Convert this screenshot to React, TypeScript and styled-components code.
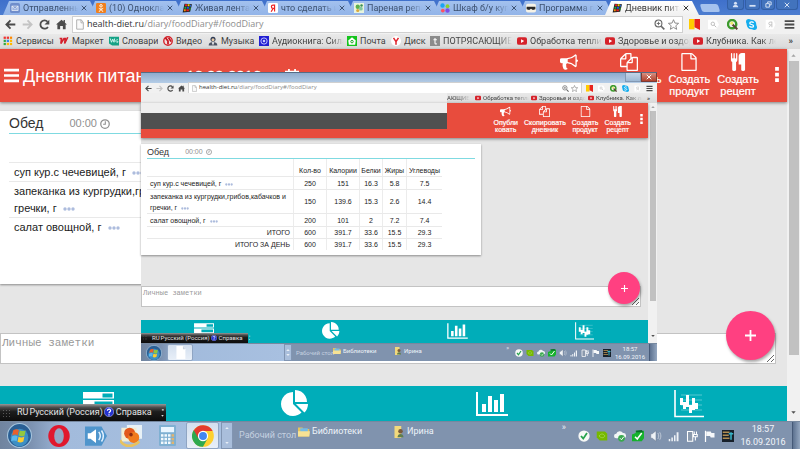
import React from 'react';
import styled, { createGlobalStyle, css, ThemeProvider } from 'styled-components';

const large = {
  toolbarH: 19, toolIcon: 11, toolGap: 6, toolPad: 5, urlH: 15, urlFont: 9, urlPad: 3, urlGap: 3, extGap: 8, extPad: 5,
  bookmarkH: 15, bookmarkFont: 9, bookmarkIcon: 10, bookmarkGap: 3,
  headerH: 53, headerPad: 4, actionIcon: 18, actionFont: 11, actionLine: 12, actionGap: 7, actionEnd: 8, dots: 15, dotsGap: 9,
  cardTop: 9, cardPad: 9, cardW: 527, cardTitle: 14, cardTitleH: 23, cardTime: 11, cardTimeGap: 23, tableFont: 11, tableHead: 28,
  rowLine: 17, cellPad: 5, nameCol: 228, cardBottom: 48,
  notesTop: 49, notesH: 31, notesFont: 11, notesEnd: 11, fab: 49, fabIcon: 11, fabBottom: 4,
  notesBottom: 22, footerH: 35, footerIcon: 28, footerPad: 4, scrollW: 13, thumbTop: 12, thumbH: 294,
  langH: 17, langFont: 9, langW: 166, langIcon: 10,
  taskH: 28, taskFont: 9, trayIcon: 12, trayGap: 6, clockFont: 9, clockLine: 13, clockW: 58, scrollerW: 12, placePad: 6,
};

const small: typeof large = {
  toolbarH: 10, toolIcon: 7, toolGap: 4, toolPad: 4, urlH: 10, urlFont: 6, urlPad: 3, urlGap: 2, extGap: 5, extPad: 4,
  bookmarkH: 10, bookmarkFont: 6, bookmarkIcon: 6, bookmarkGap: 2,
  headerH: 35, headerPad: 3, actionIcon: 11, actionFont: 7, actionLine: 7, actionGap: 6, actionEnd: 5, dots: 10, dotsGap: 3,
  cardTop: 6, cardPad: 6, cardW: 340, cardTitle: 9, cardTitleH: 15, cardTime: 7, cardTimeGap: 13, tableFont: 7, tableHead: 17,
  rowLine: 11, cellPad: 3, nameCol: 147, cardBottom: 5,
  notesTop: 31, notesH: 21, notesFont: 7, notesEnd: 7, fab: 32, fabIcon: 7, fabBottom: 3,
  notesBottom: 13, footerH: 23, footerIcon: 18, footerPad: 2, scrollW: 9, thumbTop: 8, thumbH: 190,
  langH: 10, langFont: 6, langW: 107, langIcon: 6,
  taskH: 18, taskFont: 6, trayIcon: 8, trayGap: 3, clockFont: 6, clockLine: 8, clockW: 38, scrollerW: 8, placePad: 4,
};

type Key = keyof typeof large;
const d = (key: Key) => (p: any) => `${p.theme[key]}px`;

const UI = 'Roboto, "Open Sans", sans-serif';
const URL_FONT = '"Open Sans", Roboto, sans-serif';
const PAGE = '"Liberation Sans", Arial, sans-serif';

const Global = createGlobalStyle`
  * { box-sizing: border-box; }
  body { margin: 0; overflow: hidden; }
  button, input, textarea { font: inherit; color: inherit; border: 0; padding: 0; margin: 0; background: none; }
  a { color: inherit; text-decoration: none; }
  svg { display: block; flex: none; }
`;

const Desktop = styled.div`
  position: relative;
  display: flex;
  flex-direction: column;
  min-height: 100vh;
  overflow: hidden;
  font-family: ${PAGE};
  background: #e6e6e6;
`;

const fade = css`
  -webkit-mask-image: linear-gradient(90deg, #000 calc(100% - 14px), transparent);
  mask-image: linear-gradient(90deg, #000 calc(100% - 14px), transparent);
`;

/* ---------- Tab strip ---------- */
const TabStrip = styled.div`
  display: flex;
  height: 15px;
  padding-left: 3px;
  background: linear-gradient(#3f70cb, #4c7dd0);
  font-family: ${UI};
`;
const Tab = styled.div<{ $active?: boolean }>`
  position: relative;
  z-index: ${(p) => (p.$active ? 2 : 1)};
  display: flex;
  align-items: center;
  width: 94px;
  height: 14px;
  margin: 1px -8px 0 0;
  padding: 0 10px 0 7px;
  gap: 3px;
  clip-path: polygon(6px 0, calc(100% - 7px) 0, 100% 100%, 0 100%);
  background: ${(p) => (p.$active ? 'linear-gradient(#fff, #f1f1f1)' : 'linear-gradient(#a3c1ee, #92b4e8)')};
  color: ${(p) => (p.$active ? '#333' : '#3c5170')};
`;
const TabLabel = styled.span`
  flex: 1;
  min-width: 0;
  overflow: hidden;
  white-space: nowrap;
  font-size: 9px;
  line-height: 12px;
  ${fade}
`;
const NewTab = styled.button`
  width: 18px;
  height: 8px;
  margin: 4px 0 0 10px;
  && { background: #a5c2ee; }
  border-radius: 2px;
  transform: skewX(18deg);
`;
const WindowButtons = styled.div`
  display: flex;
  margin: 0 2px 0 auto;
  gap: 1px;
  height: 10px;
`;
const WindowButton = styled.button<{ $w: number }>`
  display: grid;
  place-items: center;
  width: ${(p) => p.$w}px;
  background: #4273bd;
  border: 1px solid #335fa5;
  border-top: 0;
  border-radius: 0 0 3px 3px;
  color: #d5e2f5;
`;

/* ---------- Toolbar ---------- */
const Toolbar = styled.div`
  display: flex;
  align-items: center;
  height: ${d('toolbarH')};
  padding: 0 ${d('toolPad')};
  gap: ${d('toolGap')};
  background: #f1f1f1;
  color: #4b4b4b;
  font-family: ${UI};
`;
const IconButton = styled.button<{ $dim?: boolean }>`
  display: grid;
  place-items: center;
  color: ${(p) => (p.$dim ? '#c4c4c4' : '#4b4b4b')};
`;
const UrlBox = styled.div`
  flex: 1;
  display: flex;
  align-items: center;
  height: ${d('urlH')};
  padding: 0 ${d('urlPad')};
  gap: ${d('urlGap')};
  background: #fff;
  box-shadow: 0 0 0 1px #d0d0d0;
`;
const UrlText = styled.a`
  flex: 1;
  white-space: nowrap;
  font-family: ${URL_FONT};
  font-size: ${d('urlFont')};
  line-height: 1.2;
  color: #8e8e8e;
  b { font-weight: 400; color: #333; }
`;
const Extensions = styled.div`
  display: flex;
  align-items: center;
  gap: ${d('extGap')};
  padding-left: 1px;
`;

/* ---------- Bookmarks ---------- */
const Bookmarks = styled.nav`
  flex: 1;
  display: flex;
  align-items: center;
  height: ${d('bookmarkH')};
  background: linear-gradient(#e9e9e9, #d9d9d9);
  font-family: ${UI};
  font-size: ${d('bookmarkFont')};
  line-height: 1.2;
  color: #424242;
`;
const Bookmark = styled.a<{ $w: number; $fade?: boolean }>`
  display: flex;
  align-items: center;
  gap: ${d('bookmarkGap')};
  width: ${(p) => p.$w}px;
  padding-right: ${(p: any) => (p.$fade ? p.theme.bookmarkGap : 0)}px;
  white-space: nowrap;
  span { overflow: hidden; ${(p) => p.$fade && fade} }
`;
const BookmarkRow = styled.div`display: flex;`;
const MainBookmarks = styled(Bookmarks)`padding-left: 3px;`;
const BlankBookmarks = styled.div`width: 306px; background: #efefef;`;
const More = styled.button`
  && { margin: 0 7px 0 auto; font-weight: 700; line-height: 1; }
`;

/* ---------- Page ---------- */
const Body = styled.div`
  flex: 1;
  display: flex;
`;
const Page = styled.main`
  position: relative;
  flex: 1;
  min-width: 0;
  display: flex;
  flex-direction: column;
  background: #e6e6e6;
`;
const Scrollbar = styled.div`
  display: flex;
  flex-direction: column;
  align-items: center;
  width: ${d('scrollW')};
  padding-bottom: 3px;
  background: #f1f1f1;
`;
const Arrow = styled.span<{ $down?: boolean }>`
  display: grid;
  place-items: center;
  height: ${d('thumbTop')};
  color: ${(p) => (p.$down ? '#505050' : '#a3a3a3')};
  margin-top: ${(p) => (p.$down ? 'auto' : '0')};
`;
const Thumb = styled.span`
  width: calc(100% - 3px);
  height: ${d('thumbH')};
  background: #c1c1c1;
`;
const Header = styled.header`
  position: relative;
  display: flex;
  height: ${d('headerH')};
  background: #e84c3d;
  color: #fff;
  box-shadow: 0 1px 3px rgba(0, 0, 0, 0.45);
`;
const HeaderTitle = styled.div`
  display: flex;
  align-items: center;
  gap: 4px;
  padding-left: 4px;
  height: 100%;
  white-space: nowrap;
  h1 { margin: 0; font-size: 18px; line-height: 22px; font-weight: 400; }
`;
const DateNav = styled.div`
  display: flex;
  align-items: center;
  gap: 7px;
  font-size: 15px;
  line-height: 16px;
  -webkit-text-stroke: 0.3px #fff;
`;
const Mask = styled.div`
  width: 306px;
  height: 26px;
  padding-top: 10px;
  background: #505050;
  box-shadow: inset 0 10px #efefef;
`;
const Actions = styled.div`
  display: flex;
  align-items: flex-start;
  gap: ${d('actionGap')};
  margin-left: auto;
  padding: ${d('headerPad')} ${d('actionEnd')} 0 0;
`;
const Action = styled.button`
  display: flex;
  flex-direction: column;
  align-items: center;
  gap: 2px;
  font-size: ${d('actionFont')};
  line-height: ${d('actionLine')};
  white-space: pre-line;
  -webkit-text-stroke: 0.2px #fff;
`;
const Dots = styled.button`
  && { margin: ${(p: any) => p.theme.actionIcon - p.theme.headerPad}px 0 0 ${d('dotsGap')}; }
`;

const Card = styled.section`
  width: ${d('cardW')};
  max-width: 100%;
  margin-top: ${d('cardTop')};
  padding: 0 ${d('cardPad')} ${d('cardBottom')};
  background: #fff;
  box-shadow: 0 1px 2px rgba(0, 0, 0, 0.4);
`;
const CardHead = styled.div`
  display: flex;
  align-items: center;
  height: ${d('cardTitleH')};
  padding-top: ${d('bookmarkGap')};
  border-bottom: 1px solid #7fdae1;
  h2 { margin: 0 ${d('cardTimeGap')} 0 0; font-weight: 400; font-size: ${d('cardTitle')}; line-height: 1.2; color: #333; }
`;
const Time = styled.button`
  display: flex;
  align-items: center;
  gap: 3px;
  && { padding-left: ${d('urlPad')}; }
  font-size: ${d('cardTime')};
  line-height: 1.2;
  && { color: #8f8f8f; }
`;
const Table = styled.table`
  border-collapse: separate;
  border-spacing: 0;
  table-layout: fixed;
  font-size: ${d('tableFont')};
  line-height: ${d('rowLine')};
  color: #1c1c1c;
  th, td { padding: 0; font-weight: 400; text-align: center; border-right: 1px solid #ececec; border-top: 1px solid #e9e9e9; }
  th:last-child, td:last-child { border-right: 0; }
  thead th { height: ${d('tableHead')}; border-top: 0; vertical-align: bottom; }
`;
const Col = styled.col<{ $w?: number }>`width: ${(p: any) => p.$w ?? p.theme.nameCol}px;`;
const NameCell = styled.td`
  && { text-align: left; padding: 1px 0 0 ${d('cellPad')}; }
`;
const TotalCell = styled.th`
  && { text-align: right; padding-right: ${d('cellPad')}; }
`;
const DotsButton = styled.button`
  && { display: inline-block; margin-left: ${d('bookmarkGap')}; vertical-align: middle; }
`;

const Notes = styled.div`
  position: relative;
  display: flex;
  margin: ${d('notesTop')} ${d('notesEnd')} ${d('notesBottom')} 0;
`;
const NotesBox = styled.textarea`
  && {
    flex: 1;
    height: ${d('notesH')};
    padding: 2px 1px;
    border: 1px solid #c3c3c3;
    background: #fff;
    font-family: "Liberation Mono", monospace;
    font-size: ${d('notesFont')};
    line-height: 1.3;
    outline: 0;
    overflow: hidden;
  }
  &::placeholder { color: #999; opacity: 1; }
`;
const Fab = styled.button`
  && {
    position: absolute;
    right: 1px;
    bottom: ${d('fabBottom')};
    display: grid;
    place-items: center;
    width: ${d('fab')};
    height: ${d('fab')};
    border-radius: 50%;
    background: #ff4081;
    color: #fff;
    box-shadow: 1px 2px 3px rgba(0, 0, 0, 0.35);
  }
`;
const Footer = styled.footer`
  display: grid;
  grid-template-columns: repeat(4, 1fr);
  height: ${d('footerH')};
  margin-top: auto;
  padding-top: ${d('footerPad')};
  background: #00adb9;
  color: #fff;
  button { display: grid; justify-items: center; align-content: start; }
`;
const LanguageBar = styled.div`
  position: absolute;
  left: 0;
  bottom: 0;
  display: flex;
  align-items: center;
  gap: 1px;
  width: ${d('langW')};
  height: ${d('langH')};
  padding: 0 ${d('urlPad')} 0 2px;
  background: linear-gradient(#999 0, #4d4d4d 20%, #1d1d1d 45%, #0c0c0c);
  color: #e3e3e3;
  font: ${d('langFont')}/1.2 ${UI};
  white-space: nowrap;
`;
const Help = styled.button`
  && { display: flex; align-items: center; gap: 2px; margin: 0 ${d('extGap')} 0 auto; }
`;
const LangCode = styled.span`margin-left: ${d('placePad')};`;

/* ---------- Taskbar ---------- */
const Taskbar = styled.div`
  display: flex;
  height: ${d('taskH')};
  border-top: 1px solid #76889f;
  background: #8093ae;
  color: #e8eef6;
  font: ${d('taskFont')}/1.3 ${UI};
`;
const Apps = styled.div<{ $w: number }>`
  display: flex;
  align-items: center;
  width: ${(p) => p.$w}px;
  background: linear-gradient(90deg, #70849f 0, #7c92b1 14%, #a2bbdc 30%, #a8c0e0);
`;
const TaskButton = styled.button<{ $w: number; $open?: boolean }>`
  display: grid;
  place-items: center;
  width: ${(p) => p.$w}px;
  height: 100%;
  ${(p) => p.$open && css`&& { background: linear-gradient(#d3dfee, #e8eff8); border: 1px solid #8fa5c3; border-radius: 2px; }`}
`;
const Scroller = styled.div`
  display: flex;
  flex-direction: column;
  justify-content: space-between;
  align-items: center;
  width: ${d('scrollerW')};
  padding: 3px 0;
  background: #a9bedb;
  border: 1px solid #8195b2;
`;
const Places = styled.div`
  flex: 1;
  display: flex;
  align-items: flex-start;
  white-space: nowrap;
`;
const Place = styled.button<{ $w: number; $dim?: boolean }>`
  && {
    display: flex;
    align-items: center;
    gap: 2px;
    width: ${(p) => p.$w}px;
    height: ${(p: any) => (p.$dim ? '100%' : `${p.theme.taskH - p.theme.extGap}px`)};
    padding-left: ${(p: any) => (p.$dim ? p.theme.placePad : 0)}px;
    color: ${(p) => (p.$dim ? '#c5d1e0' : '#eef3f9')};
  }
`;
const Tray = styled.div`
  display: flex;
  align-items: center;
  gap: ${d('trayGap')};
`;
const Chevron = styled.button`
  align-self: flex-start;
  && { margin-right: ${d('trayGap')}; line-height: 1.2; }
`;
const Clock = styled.time`
  width: ${d('clockW')};
  align-self: center;
  text-align: center;
  font-size: ${d('clockFont')};
  line-height: ${d('clockLine')};
  color: #f1f5fa;
`;
const ShowDesktop = styled.button`
  && { width: ${d('scrollerW')}; max-width: 8px; background: linear-gradient(90deg, #5d7290, #94a7c0); border-left: 1px solid #465a78; }
`;

/* ---------- Floating window ---------- */
const FloatingWindow = styled.section`
  position: absolute;
  left: 141px;
  top: 72px;
  z-index: 5;
  width: 516px;
  background: #fff;
  padding-bottom: 2px;
`;
const TitleBar = styled.div`
  display: flex;
  justify-content: flex-end;
  height: 11px;
  border-top: 1px solid #566b84;
  background: linear-gradient(#8eabce, #b5cde7);
`;
const TitleButton = styled.button<{ $close?: boolean }>`
  && {
    display: grid;
    place-items: center;
    width: 16px;
    height: 9px;
    color: #fff;
    background: ${(p) => (p.$close ? 'linear-gradient(#d78e80, #b0402c)' : 'linear-gradient(#c4d5e8, #9db8d4)')};
    border: 1px solid ${(p) => (p.$close ? '#7a3a35' : '#8298b3')};
    border-top: 0;
  }
`;

/* ---------- Icons ---------- */
const FA = ({ h, box = 1792, path }: { h: number; box?: number; path: string }) => (
  <svg width={Math.round((h * box) / 1792)} height={h} viewBox={`0 0 ${box} 1792`} fill="currentColor"><path d={path} /></svg>
);
const P = {
  file: 'M1596 380q28 28 48 76t20 88v1152q0 40-28 68t-68 28h-1344q-40 0-68-28t-28-68v-1600q0-40 28-68t68-28h896q40 0 88 20t76 48zm-444-244v376h376q-10-29-22-41l-313-313q-12-12-41-22zm384 1528v-1024h-416q-40 0-68-28t-28-68v-416h-768v1536h1280z',
  fork: 'M832 64v640q0 61-35.5 111t-92.5 70v779q0 52-38 90t-90 38h-128q-52 0-90-38t-38-90v-779q-57-20-92.5-70t-35.5-111v-640q0-26 19-45t45-19 45 19 19 45v416q0 26 19 45t45 19 45-19 19-45v-416q0-26 19-45t45-19 45 19 19 45v416q0 26 19 45t45 19 45-19 19-45v-416q0-26 19-45t45-19 45 19 19 45zm768 0v1600q0 52-38 90t-90 38h-128q-52 0-90-38t-38-90v-512h-224q-13 0-22.5-9.5t-9.5-22.5v-800q0-132 94-226t226-94h256q26 0 45 19t19 45z',
  files: 'M1696 384q40 0 68 28t28 68v1216q0 40-28 68t-68 28h-960q-40 0-68-28t-28-68v-288h-544q-40 0-68-28t-28-68v-672q0-40 20-88t48-76l408-408q28-28 76-48t88-20h416q40 0 68 28t28 68v328q68-40 128-40h416zm-544 213l-299 299h299v-299zm-640-384l-299 299h299v-299zm196 647l316-316v-416h-384v416q0 40-28 68t-68 28h-416v640h512v-256q0-40 20-88t48-76zm956 804v-1152h-384v416q0 40-28 68t-68 28h-416v640h896z',
  horn: 'M1664 640q53 0 90.5 37.5t37.5 90.5-37.5 90.5-90.5 37.5v384q0 52-38 90t-90 38q-417-347-812-380-58 19-91 66t-31 100.5 40 92.5q-20 33-23 65.5t6 58 33.5 55 48 50 61.5 50.5q-29 58-111.5 83t-168.5 11.5-132-55.5q-7-23-29.5-87.5t-32-94.5-23-89-15-101 3.5-98.5 22-110.5h-122q-66 0-113-47t-47-113v-192q0-66 47-113t113-47h480q435 0 896-384 52 0 90 38t38 90v384zm-128 604v-954q-394 302-768 343v270q377 42 768 341z',
  bars: 'M640 896v512h-256v-512h256zm384-512v1024h-256v-1024h256zm1024 1152v128h-2048v-1536h128v1408h1920zm-640-896v768h-256v-768h256zm384-384v1152h-256v-1152h256z',
  pie: 'M768 890l546 546q-106 108-247.5 168t-298.5 60q-209 0-385.5-103t-279.5-279.5-103-385.5 103-385.5 279.5-279.5 385.5-103v762zm187 6h773q0 157-60 298.5t-168 247.5zm709-128h-768v-768q209 0 385.5 103t279.5 279.5 103 385.5z',
};

const Svg = ({ s, w, children, box = '0 0 16 16' }: { s: number; w?: number; box?: string; children: React.ReactNode }) => (
  <svg width={w ?? s} height={s} viewBox={box} fill="none">{children}</svg>
);

const icons: Record<string, (s: number) => React.ReactElement> = {
  back: (s) => <Svg s={s}><path d="M15 8H3M8 2L2 8l6 6" stroke="currentColor" strokeWidth="2.6" /></Svg>,
  forward: (s) => <Svg s={s}><path d="M1 8h12M8 2l6 6-6 6" stroke="currentColor" strokeWidth="2.6" /></Svg>,
  reload: (s) => <Svg s={s}><path d="M13 11.5A6 6 0 1 1 12.5 4" stroke="currentColor" strokeWidth="2.6" /><path d="M15 1v7H8z" fill="currentColor" /></Svg>,
  home: (s) => <Svg s={s}><path d="M8 1L0 8h2v7h4v-5h4v5h4V8h2l-3-2.6V1.5h-2v2z" fill="currentColor" /></Svg>,
  page: (s) => <Svg s={s} w={Math.round(s * 0.75)} box="2 0 12 16"><path d="M3 1h7l3 4v10H3zM9.5 1v4.500H13" fill="#fafafa" stroke="#a8a8a8" strokeWidth="1.3" /></Svg>,
  zoom: (s) => <Svg s={s}><circle cx="6.500" cy="6.500" r="5" stroke="#666" strokeWidth="1.6" /><path d="M10.500 10.500L15 15" stroke="#666" strokeWidth="2.4" /><path d="M4 6.500h5M6.500 4v5" stroke="#666" strokeWidth="1.3" /></Svg>,
  star: (s) => <Svg s={s}><path d="M8 1l2.100 4.900 5.300.4-4 3.500 1.200 5.200L8 12.200 3.400 15l1.200-5.200-4-3.500 5.300-.4z" stroke="#777" strokeWidth="1.2" /></Svg>,
  yandexMark: (s) => <Svg s={s}><path d="M0 0h8v15H0z" fill="#fc0" /><path d="M8 0h8v16l-8-4z" fill="#e8231c" /></Svg>,
  lens: (s) => <Svg s={s}><path d="M0 1h12l4 7-4 7H0z" fill="#fff" /><circle cx="7" cy="7" r="2.500" stroke="#bbb" strokeWidth="1.400" /><path d="M9 9l3 3" stroke="#bbb" strokeWidth="1.400" /></Svg>,
  qGreen: (s) => <Svg s={s}><circle cx="7.500" cy="7.500" r="6" stroke="#3c9a2c" strokeWidth="3.500" /><path d="M8 8l7 7" stroke="#5b4636" strokeWidth="3" /><circle cx="7" cy="6" r="2.200" fill="#eceb6b" /></Svg>,
  skype: (s) => <Svg s={s}><circle cx="8" cy="8" r="7" fill="#14adee" /><circle cx="4" cy="4" r="4" fill="#14adee" /><circle cx="12" cy="12" r="4" fill="#14adee" /><path d="M11 5.500C10 3.500 5.500 3.500 5.500 6s5.500 1.500 5.500 4-4.500 2.500-6 .5" stroke="#fff" strokeWidth="1.8" /></Svg>,
  yaGray: (s) => <Svg s={s}><path d="M1 1h11l3 7-3 7H1z" fill="#fff" /><path d="M10 4v8M10 4.500H7.500a2 2 0 0 0 0 4H10M8 9l-2 3" stroke="#bbb" strokeWidth="1.2" /></Svg>,
  menu: (s) => <Svg s={s}><path d="M1 3h14M1 8h14M1 13h14" stroke="#4b4b4b" strokeWidth="2.700" /></Svg>,
  mail: (s) => <Svg s={s}><rect width="16" height="16" rx="3" fill="#6f8dcb" /><path d="M3 5h10v7H3zM3 5l5 4 5-4" stroke="#fff" fill="#9fb5e0" /></Svg>,
  ok: (s) => <Svg s={s}><rect width="16" height="16" rx="2" fill="#f0801e" /><circle cx="8" cy="4.500" r="2" stroke="#fff" strokeWidth="1.500" /><path d="M4.500 8.500c2 1.700 5 1.700 7 0M8 10l-3 4M8 10l3 4" stroke="#fff" strokeWidth="1.600" /></Svg>,
  cube: (s) => <Svg s={s}><path d="M4 1l12 1-3 12-12 1z" fill="#222" /><path d="M5 2h3v3H5z" fill="#e22" /><path d="M9 2h3v3H9z" fill="#fc0" /><path d="M13 3h2l-1 3h-2z" fill="#26c" /><path d="M4 6h3v3H4z" fill="#2a4" /><path d="M8 6h3v3H8z" fill="#25d" /><path d="M3 10h3v3H3z" fill="#f80" /><path d="M7 10h4v3H7z" fill="#d22" /><path d="M12 7h2l-1 5h-1z" fill="#3b3" /></Svg>,
  ya: (s) => <Svg s={s}><rect width="16" height="16" rx="2" fill="#fff" /><path d="M10.500 2.500v11M10.500 3.300H8a2.500 2.500 0 0 0 0 5.200h2.500M8 9l-3 5" stroke="#e22" strokeWidth="1.900" /></Svg>,
  plant: (s) => <Svg s={s}><rect width="16" height="16" fill="#e9f4dc" /><circle cx="6" cy="6" r="3.500" fill="#5cb04b" /><circle cx="11" cy="9" r="3" fill="#80c7a0" /><circle cx="6" cy="12" r="2.500" fill="#dba83c" /><circle cx="12" cy="4" r="2" fill="#3b8f55" /></Svg>,
  four: (s) => <Svg s={s}><circle cx="4" cy="4" r="3.500" fill="#1aa4f2" /><circle cx="12" cy="5" r="3" fill="#8bd12a" /><circle cx="4.500" cy="12" r="3" fill="#ff5163" /><circle cx="12" cy="12" r="3.500" fill="#7d4ee8" /></Svg>,
  panda: (s) => <Svg s={s}><rect y="1" width="16" height="14" rx="3" fill="#f6f2e6" /><path d="M1 6h14v4l-4 1-3-2-3 2-4-1z" fill="#292929" /></Svg>,
  apps: (s) => <Svg s={s}>{['#e33', '#e33', '#f80', '#3a4', '#38e', '#fb0', '#3a4', '#fb0', '#fb0'].map((c, i) => <rect key={i} x={1 + (i % 3) * 5} y={1 + Math.floor(i / 3) * 5} width="3.600" height="3.600" fill={c} />)}</Svg>,
  market: (s) => <Svg s={s}><path d="M1 4h3L3 12l5-8h2l-1 8 5-10" stroke="#d3202c" strokeWidth="2.600" /></Svg>,
  words: (s) => <Svg s={s}><path d="M0 1h16v14H5l-5-3z" fill="#16a286" /><path d="M2 4l2 6 2-5 2 5 1-6M14 6c-4-1-4 5 0 4v-2" stroke="#e5fff8" strokeWidth="1.400" /></Svg>,
  video: (s) => <Svg s={s}><circle cx="8" cy="8" r="6.800" stroke="#d4242b" strokeWidth="2.200" fill="#f4dede" /><path d="M4 3l4 5v5M9 3l4 6" stroke="#c3151e" strokeWidth="2.800" /></Svg>,
  music: (s) => <Svg s={s}><circle cx="8" cy="5" r="4" fill="#2e3a53" /><circle cx="8" cy="6" r="2.400" fill="#e7c9a6" /><path d="M1 15c0-7 14-7 14 0z" fill="#4b5364" /><path d="M6 10h4l-2 5z" fill="#fff" /></Svg>,
  audio: (s) => <Svg s={s}><rect width="16" height="16" fill="#2220d2" /><circle cx="8" cy="8" r="5" stroke="#c8c8ff" strokeWidth="1.500" /><circle cx="8" cy="8" r="2" fill="#c8c8ff" /></Svg>,
  post: (s) => <Svg s={s}><rect width="16" height="16" fill="#14c41c" /><path d="M8 2l6 5-1 7H3L2 7z" fill="#fff" /><circle cx="8" cy="9" r="2" stroke="#14a41c" strokeWidth="1.500" /></Svg>,
  disk: (s) => <Svg s={s}><circle cx="8" cy="8" r="8" fill="#fff" /><path d="M4 3l4 6 4-6M8 8v6" stroke="#e0242c" strokeWidth="2.400" /></Svg>,
  tGray: (s) => <Svg s={s}><rect width="16" height="16" fill="#8b8b8b" /><path d="M8 3v8c0 2 1 2 3 1.500M5.500 6H11" stroke="#fff" strokeWidth="1.700" /></Svg>,
  tube: (s) => <Svg s={s}><rect y="2" width="16" height="12" rx="3" fill="#d5222a" /><path d="M6.500 5v6l5-3z" fill="#fff" /></Svg>,
  clock: (s) => <Svg s={s}><circle cx="8" cy="8" r="6.800" stroke="currentColor" strokeWidth="2" /><path d="M8.500 3.500v5H5" stroke="currentColor" strokeWidth="1.700" /></Svg>,
  plus: (s) => <Svg s={s}><path d="M8 0v16M0 8h16" stroke="currentColor" strokeWidth="2.600" /></Svg>,
  burger: (s) => <Svg s={s}><path d="M0 2.300h16M0 8h16M0 13.700h16" stroke="currentColor" strokeWidth="2.800" /></Svg>,
  kebab: (s) => <Svg s={s} w={Math.round(s / 4)} box="0 0 4 16"><path d="M0 0h4v4H0zM0 6h4v4H0zM0 12h4v4H0z" fill="currentColor" /></Svg>,
  close: (s) => <Svg s={s}><path d="M2 2l12 12M14 2L2 14" stroke="currentColor" strokeWidth="2.600" /></Svg>,
  minimize: (s) => <Svg s={s}><path d="M1 9h14v4H1z" fill="currentColor" /></Svg>,
  restore: (s) => <Svg s={s}><path d="M6 5V2h8v7h-3M2 6h8v8H2z" stroke="currentColor" strokeWidth="2.200" /></Svg>,
  user: (s) => <Svg s={s}><circle cx="8" cy="5" r="3.500" fill="currentColor" /><path d="M2 13c0-5 12-5 12 0v1H2z" fill="currentColor" /></Svg>,
  up: (s) => <Svg s={s}><path d="M1 12l7-8 7 8z" fill="currentColor" /></Svg>,
  down: (s) => <Svg s={s}><path d="M1 4l7 8 7-8z" fill="currentColor" /></Svg>,
  calendar: (s) => <Svg s={s}><path d="M1 3h14v12H1zM1 6h14M4.500 0v4M11.500 0v4" stroke="currentColor" strokeWidth="2" /></Svg>,
  tasks: (s) => (
    <Svg s={s} w={Math.round((s * 31) / 28)} box="0 0 31 28">
      <path d="M0 2h31v6.500H0zM0 10h31v7H0zM0 19h31v7H0z" fill="currentColor" />
      <path d="M19.500 3.500h10v4h-10zM11.500 11.500h18V16h-18zM17 20.500h12v4H17z" fill="#00adb9" />
    </Svg>
  ),
  candles: (s) => (
    <Svg s={s} w={Math.round((s * 30) / 28)} box="0 0 30 28">
      <path d="M7 5h21M7 10h21M7 15h21M7 20h21" stroke="#8fdbe0" strokeWidth=".6" />
      <path d="M1 0v26.500h29" stroke="currentColor" strokeWidth="1.600" />
      <path d="M6 8h3v7H6zM9 12h3v7H9zM12 5h3v12h-3zM15 15h3v8h-3zM18 8h3v12h-3zM21 13h3v6h-3z" fill="currentColor" />
    </Svg>
  ),
  start: (s) => (
    <Svg s={s} box="0 0 24 24">
      <circle cx="12" cy="12" r="11.500" fill="#2a5f94" stroke="#a9c8e0" />
      <circle cx="12" cy="14" r="8.500" fill="#3d8fc4" />
      <path d="M6 7c2-1.300 3.700-1.300 5.400-.3l-1 5c-1.700-1-3.500-1-5.400.2z" fill="#e9602c" />
      <path d="M12.300 7.100c2 1 3.700.9 5.600-.2l-1 5c-1.900 1.100-3.700 1.100-5.600.2z" fill="#93c83e" />
      <path d="M4.800 13c1.900-1.200 3.700-1.200 5.400-.2l-1 4.700c-1.700-1-3.500-1-5.400.2z" fill="#59b7ee" />
      <path d="M11.100 13.200c1.900.9 3.700.9 5.600-.2l-1 4.800c-1.900 1.100-3.700 1.100-5.600.2z" fill="#fdcc2e" />
    </Svg>
  ),
  opera: (s) => <Svg s={s}><ellipse cx="8" cy="8" rx="7.800" ry="8" fill="#e0182d" /><ellipse cx="8" cy="8" rx="3.500" ry="5.700" fill="#92a7c4" /></Svg>,
  sound: (s) => <Svg s={s}><path d="M0 1h12l4 7-4 7H0z" fill="#4f95cc" /><path d="M2 6h2l4-3v10l-4-3H2z" fill="#fff" /><path d="M10 5c1.500 2 1.500 4 0 6M12 4c2 3 2 5 0 8" stroke="#e4f2ff" strokeWidth="1.100" /></Svg>,
  gallery: (s) => <Svg s={s}><path d="M5 0h11v10H5z" fill="#e8f1f6" /><path d="M1 2h11v10H1z" fill="#f2ecd2" /><circle cx="7" cy="6" r="4" fill="#e2571c" /><circle cx="10" cy="9" r="4" fill="#f07a1d" /><circle cx="8" cy="7" r="1.300" fill="#8b2c10" /><path d="M0 11c3 6 10 5 14 1" stroke="#e8c25f" strokeWidth="2" /></Svg>,
  calc: (s) => <Svg s={s} w={Math.round(s * 0.8)} box="0 0 13 16"><rect width="13" height="16" rx="1" fill="#7fb0d2" /><path d="M1.500 1.500h10v4h-10z" fill="#eaf6ff" />{[0, 1, 2, 3].map((c) => [0, 1, 2].map((r) => <rect key={`${c}${r}`} x={1.5 + c * 2.7} y={7 + r * 2.8} width="1.900" height="1.900" fill={c === 3 ? '#e2b46e' : '#f3f9fd'} />))}</Svg>,
  chrome: (s) => (
    <Svg s={s} box="0 0 24 24">
      <circle cx="12" cy="12" r="11.800" fill="#fdd02f" />
      <path d="M12 12L2 5.500A11.800 11.800 0 0 0 12 23.800l5-9z" fill="#2da94f" />
      <path d="M12 6.500h10.500A11.800 11.800 0 0 0 2 5.800L7 14.500z" fill="#e33b2e" />
      <circle cx="12" cy="12" r="5.600" fill="#fff" /><circle cx="12" cy="12" r="4.300" fill="#4286f0" />
    </Svg>
  ),
  doc: (s) => <Svg s={s}><path d="M3 0h8l3 4v12H3z" fill="#fff" /><path d="M11 0v4h3z" fill="#c8d3df" /></Svg>,
  folder: (s) => <Svg s={s}><path d="M0 2h6l1 2h8v10H0z" fill="#e5c35d" /><path d="M3 3h10v5H3z" fill="#75bce6" /><path d="M0 7h16l-1 7H0z" fill="#f7e294" /></Svg>,
  person: (s) => <Svg s={s}><path d="M2 0h9v16H2z" fill="#f2d97c" /><circle cx="10" cy="7" r="3" fill="#7a5b3c" /><path d="M6 15c0-6 8-6 8 0z" fill="#5f7d4e" /></Svg>,
  check: (s) => <Svg s={s}><circle cx="8" cy="8" r="7.500" fill="#f6f8f6" /><path d="M4 8l3 3.500L12 4" stroke="#27a34c" strokeWidth="2.400" /></Svg>,
  nvidia: (s) => <Svg s={s}><path d="M1 2h11l3 3v9H5l-4-4z" fill="#76b900" /><path d="M4 8c3-4 6-3 8 0-2 3-5 3-8 0z" stroke="#a9d85c" /></Svg>,
  cloud: (s) => <Svg s={s}><path d="M3 11a3 3 0 0 1 0-6 5 5 0 0 1 9-1 3.500 3.500 0 0 1 1 7z" fill="#f1f5f5" /><circle cx="10" cy="11" r="4.500" fill="#39a94e" /><path d="M8 11l2 2 3-4" stroke="#fff" strokeWidth="1.300" /></Svg>,
  shield: (s) => <Svg s={s}><path d="M0 6l5-2V1h11v10l-3 4H0z" fill="#16b22d" /><path d="M4 9l3 3 6-8" stroke="#fff" strokeWidth="2" /><path d="M5 1l8-1 2 3H6z" fill="#0a6b2c" /></Svg>,
  volume: (s) => <Svg s={s}><path d="M1 5h2l5-4v14l-5-4H1z" fill="#eef2f6" stroke="#69798f" strokeWidth=".7" /><path d="M10.500 4c1.500 3 1.500 5 0 8M13 3c2 4 2 6 0 10" stroke="#c8d1dd" strokeWidth="1.100" /></Svg>,
  signal: (s) => <Svg s={s}><path d="M1 15v-3h2v3zM4.500 15v-5h2v5zM8 15V7h2v8zM11.500 15V3h2.500v12z" fill="#eef2f6" /></Svg>,
  battery: (s) => <Svg s={s}><path d="M2 2h7v13H2z" fill="#8a99ad" stroke="#fff" strokeWidth="1.400" /><path d="M11 2v4M14 2v4M10 6h5v3h-5zM12.500 9v5" stroke="#fff" strokeWidth="1.400" /></Svg>,
  flag: (s) => <Svg s={s}><path d="M2 1v15" stroke="#fff" strokeWidth="1.600" /><path d="M3 2h6l1 2h4v6H9L8 8H3z" fill="#f6f8fa" /></Svg>,
  photo: (s) => <Svg s={s}><rect width="16" height="16" fill="#17202a" /><path d="M1 3h9M1 7h8M1 11h9" stroke="#b08d52" strokeWidth="1.700" /><path d="M12 3v10M9 5h6" stroke="#38b5c9" strokeWidth="2" /></Svg>,
  help: (s) => <Svg s={s}><circle cx="8" cy="8" r="7.500" fill="#2432d0" stroke="#a7adf3" /><path d="M5.500 6c0-3.500 5.500-3 5 0 0 1.500-2.500 2-2.500 4M8 11.500v2" stroke="#fff" strokeWidth="2" /></Svg>,
  grip: (s) => <Svg s={s}>{[2, 8, 14].map((x) => [2, 8, 14].map((y) => <rect key={`${x}${y}`} x={x} y={y} width="1.500" height="1.500" fill="#8a8a8a" />))}</Svg>,
  handle: (s) => <Svg s={s} w={3} box="0 0 4 16"><path d="M1 2h3v2H1zM0 11h4l-2 3z" fill="#ddd" /></Svg>,
};
const Icon = ({ name, s }: { name: string; s: number }) => icons[name](s);

/* ---------- Shared parts ---------- */
type Size = typeof large;

const BrowserToolbar = ({ z }: { z: Size }) => (
  <Toolbar>
    <IconButton aria-label="Назад"><Icon name="back" s={z.toolIcon} /></IconButton>
    <IconButton aria-label="Вперёд" $dim><Icon name="forward" s={z.toolIcon} /></IconButton>
    <IconButton aria-label="Обновить"><Icon name="reload" s={z.toolIcon} /></IconButton>
    <IconButton aria-label="Домой"><Icon name="home" s={z.toolIcon} /></IconButton>
    <UrlBox>
      <Icon name="page" s={z.toolIcon} />
      <UrlText href="#/foodDiary"><b>health-diet.ru</b>/diary/foodDiary#/foodDiary</UrlText>
      <Icon name="zoom" s={z.toolIcon} />
      <Icon name="star" s={z.toolIcon} />
    </UrlBox>
    <Extensions>
      {['yandexMark', 'lens', 'qGreen', 'skype', 'yaGray', 'menu'].map((n) => (
        <IconButton key={n} aria-label={n}><Icon name={n} s={z.toolIcon} /></IconButton>
      ))}
    </Extensions>
  </Toolbar>
);

const HeaderActions = ({ z }: { z: Size }) => (
  <Actions>
    <Action><FA h={z.actionIcon} path={P.horn} />{'Опубли\nковать'}</Action>
    <Action><FA h={z.actionIcon} path={P.files} />{'Скопировать\nдневник'}</Action>
    <Action><FA h={z.actionIcon} path={P.file} />{'Создать\nпродукт'}</Action>
    <Action><FA h={z.actionIcon} path={P.fork} />{'Создать\nрецепт'}</Action>
    <Dots aria-label="Ещё"><Icon name="kebab" s={z.dots} /></Dots>
  </Actions>
);

const foods = [
  { name: 'суп кур.с чечевицей, г', v: ['250', '151', '16.3', '5.8', '7.5'] },
  { name: 'запеканка из кургрудки,грибов,кабачков и гречки, г', v: ['150', '139.6', '15.3', '2.6', '14.4'] },
  { name: 'салат овощной, г', v: ['200', '101', '2', '7.2', '7.4'] },
];
const columns = [['Кол-во', 33], ['Калории', 33], ['Белки', 23], ['Жиры', 24], ['Углеводы', 35]] as const;
const totals = ['600', '391.7', '33.6', '15.5', '29.3'];

const MealCard = ({ z, values }: { z: Size; values?: boolean }) => (
  <Card>
    <CardHead>
      <h2>Обед</h2>
      <Time>00:00 <Icon name="clock" s={z.cardTime - 1} /></Time>
    </CardHead>
    <Table>
      <colgroup>
        <Col />
        {values && columns.map(([name, w]) => <Col key={name} $w={w} />)}
      </colgroup>
      <thead>
        <tr><th />{values && columns.map(([name]) => <th key={name}>{name}</th>)}</tr>
      </thead>
      <tbody>
        {foods.map((f) => (
          <tr key={f.name}>
            <NameCell>
              {f.name}{' '}
              <DotsButton aria-label="Действия">
                <Svg s={Math.ceil(z.cellPad * 0.8)} w={z.cellPad * 2 + 2} box="0 0 12 4">
                  <circle cx="2" cy="2" r="1.700" fill="#adbcdd" /><circle cx="6" cy="2" r="1.700" fill="#adbcdd" /><circle cx="10" cy="2" r="1.700" fill="#adbcdd" />
                </Svg>
              </DotsButton>
            </NameCell>
            {values && f.v.map((v, i) => <td key={i}>{v}</td>)}
          </tr>
        ))}
        {values && ['ИТОГО', 'ИТОГО ЗА ДЕНЬ'].map((label) => (
          <tr key={label}>
            <TotalCell scope="row">{label}</TotalCell>
            {totals.map((v) => <td key={v}>{v}</td>)}
          </tr>
        ))}
      </tbody>
    </Table>
  </Card>
);

const PageBottom = ({ z }: { z: Size }) => (
  <>
    <Notes>
      <NotesBox placeholder="Личные заметки" aria-label="Личные заметки" />
      <Fab aria-label="Добавить"><Icon name="plus" s={z.fabIcon} /></Fab>
    </Notes>
    <Footer>
      <button aria-label="Задачи"><Icon name="tasks" s={z.footerIcon} /></button>
      <button aria-label="Доли"><FA h={z.footerIcon} path={P.pie} /></button>
      <button aria-label="Статистика"><FA h={z.footerIcon} box={2048} path={P.bars} /></button>
      <button aria-label="График"><Icon name="candles" s={z.footerIcon} /></button>
    </Footer>
    <LanguageBar>
      <Icon name="grip" s={z.langIcon - 2} />
      <LangCode>RU</LangCode>
      <span>Русский (Россия)</span>
      <Help><Icon name="help" s={z.langIcon} />Справка</Help>
      <Icon name="handle" s={z.langIcon} />
    </LanguageBar>
  </>
);

const PageScrollbar = ({ z }: { z: Size }) => (
  <Scrollbar>
    <Arrow><Icon name="up" s={Math.round(z.scrollW / 2.4)} /></Arrow>
    <Thumb />
    <Arrow $down><Icon name="down" s={Math.round(z.scrollW / 2.4)} /></Arrow>
  </Scrollbar>
);

const SystemBar = ({ z, apps, appsWidth, places }: { z: Size; apps: React.ReactNode; appsWidth: number; places: number[] }) => (
  <Taskbar>
    <Apps $w={appsWidth}>{apps}</Apps>
    <Scroller><Icon name="up" s={4} /><Icon name="down" s={4} /></Scroller>
    <Places>
      <Place $w={places[0]} $dim>Рабочий стол</Place>
      <Place $w={places[1]}><Icon name="folder" s={z.trayIcon} />Библиотеки</Place>
      <Place $w={places[2]}><Icon name="person" s={z.trayIcon} />Ирина</Place>
    </Places>
    <Tray>
      <Chevron aria-label="Показать скрытые">»</Chevron>
      {['check', 'nvidia', 'cloud', 'shield', 'volume', 'signal', 'battery', 'flag', 'photo'].map((n) => <Icon key={n} name={n} s={z.trayIcon} />)}
    </Tray>
    <Clock>18:57<br />16.09.2016</Clock>
    <ShowDesktop aria-label="Показать рабочий стол" />
  </Taskbar>
);

const tabs = [
  ['mail', 'Отправленные'], ['ok', '(10) Одноклассники'], ['cube', 'Живая лента'], ['ya', 'что сделать из'],
  ['plant', 'Пареная репа'], ['four', 'Шкаф б/у купить'], ['panda', 'Программа питания'], ['cube', 'Дневник питания'],
];
const bookmarks: [string, string, number, boolean?][] = [
  ['apps', 'Сервисы', 56], ['market', 'Маркет', 50], ['words', 'Словари', 54], ['video', 'Видео', 45], ['music', 'Музыка', 51],
  ['audio', 'Аудиокнига: Сила', 88, true], ['post', 'Почта', 44], ['disk', 'Диск', 39], ['tGray', 'ПОТРЯСАЮЩИЕ', 87, true],
  ['tube', 'Обработка теплицы', 88, true], ['tube', 'Здоровье и оздоровление', 88, true], ['tube', 'Клубника. Как лечить', 86, true],
];
const innerBookmarks: [string, string, number][] = [
  ['tube', 'Обработка теплицы', 56], ['tube', 'Здоровье и оздоровление', 57], ['tube', 'Клубника. Как лечить', 56],
];

const InnerWindow = () => (
  <ThemeProvider theme={small}>
    <FloatingWindow>
      <TitleBar>
        <TitleButton aria-label="Свернуть" />
        <TitleButton aria-label="Закрыть" $close><Icon name="close" s={6} /></TitleButton>
      </TitleBar>
      <BrowserToolbar z={small} />
      <BookmarkRow>
        <BlankBookmarks />
        <Bookmarks>
          <Bookmark href="#" $w={28} $fade><span>АЮЩИЕ</span></Bookmark>
          {innerBookmarks.map(([icon, label, w]) => (
            <Bookmark href="#" key={label} $w={w} $fade><Icon name={icon} s={6} /><span>{label}</span></Bookmark>
          ))}
          <More>»</More>
        </Bookmarks>
      </BookmarkRow>
      <Body>
        <Page>
          <Header><Mask /><HeaderActions z={small} /></Header>
          <MealCard z={small} values />
          <PageBottom z={small} />
        </Page>
        <PageScrollbar z={small} />
      </Body>
      <SystemBar
        z={small}
        appsWidth={143}
        places={[41, 61, 60]}
        apps={<><TaskButton $w={26} aria-label="Пуск"><Icon name="start" s={16} /></TaskButton><TaskButton $w={26} $open aria-label="Документ"><Icon name="doc" s={13} /></TaskButton></>}
      />
    </FloatingWindow>
  </ThemeProvider>
);

export default function App() {
  return (
    <ThemeProvider theme={large}>
      <Global />
      <Desktop>
        <TabStrip>
          {tabs.map(([icon, label], i) => (
            <Tab key={label} $active={i === 7}>
              <Icon name={icon} s={10} /><TabLabel>{label}</TabLabel><Icon name="close" s={6} />
            </Tab>
          ))}
          <NewTab aria-label="Новая вкладка" />
          <WindowButtons>
            <WindowButton $w={17} aria-label="Профиль"><Icon name="user" s={7} /></WindowButton>
            <WindowButton $w={15} aria-label="Свернуть"><Icon name="minimize" s={7} /></WindowButton>
            <WindowButton $w={14} aria-label="Развернуть"><Icon name="restore" s={7} /></WindowButton>
            <WindowButton $w={22} aria-label="Закрыть"><Icon name="close" s={6} /></WindowButton>
          </WindowButtons>
        </TabStrip>
        <BrowserToolbar z={large} />
        <BookmarkRow>
          <MainBookmarks>
            {bookmarks.map(([icon, label, w, faded]) => (
              <Bookmark href="#" key={label} $w={w} $fade={faded}><Icon name={icon} s={10} /><span>{label}</span></Bookmark>
            ))}
            <More>»</More>
          </MainBookmarks>
        </BookmarkRow>
        <Body>
          <Page>
            <Header>
              <HeaderTitle>
                <Icon name="burger" s={15} />
                <h1>Дневник питания</h1>
                <DateNav><Icon name="back" s={10} /><span>16.09.2016</span><Icon name="forward" s={10} /><Icon name="calendar" s={14} /></DateNav>
              </HeaderTitle>
              <HeaderActions z={large} />
            </Header>
            <MealCard z={large} />
            <PageBottom z={large} />
          </Page>
          <PageScrollbar z={large} />
        </Body>
        <SystemBar
          z={large}
          appsWidth={221}
          places={[65, 95, 100]}
          apps={
            <>
              <TaskButton $w={39} aria-label="Пуск"><Icon name="start" s={25} /></TaskButton>
              <TaskButton $w={40} aria-label="Opera"><Icon name="opera" s={22} /></TaskButton>
              <TaskButton $w={34} aria-label="Звук"><Icon name="sound" s={22} /></TaskButton>
              <TaskButton $w={36} aria-label="Галерея"><Icon name="gallery" s={22} /></TaskButton>
              <TaskButton $w={37} aria-label="Калькулятор"><Icon name="calc" s={21} /></TaskButton>
              <TaskButton $w={33} $open aria-label="Chrome"><Icon name="chrome" s={22} /></TaskButton>
            </>
          }
        />
        <InnerWindow />
      </Desktop>
    </ThemeProvider>
  );
}
